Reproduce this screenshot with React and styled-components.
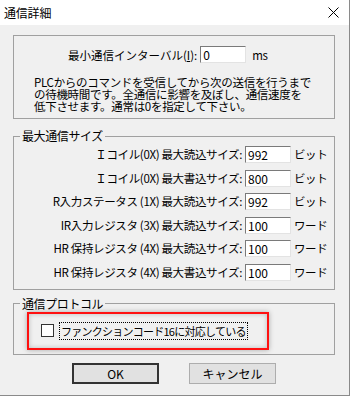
import styled, { createGlobalStyle } from "styled-components";

const GlobalStyle = createGlobalStyle`
  html, body {
    margin: 0;
    padding: 0;
    background: #f0f0f0;
  }
  body {
    width: 350px;
    height: 396px;
    overflow: hidden;
    font-family: "Noto Sans CJK JP", "Noto Sans", sans-serif;
    color: #000;
  }
`;

const Window = styled.div`
  box-sizing: border-box;
  width: 350px;
  height: 396px;
  background: #f0f0f0;
  border-right: 1px solid #8a8a8a;
  border-bottom: 1px solid #8a8a8a;
  display: flex;
  flex-direction: column;
`;

const TitleBar = styled.div`
  height: 25px;
  flex: none;
  background: #fff;
  display: flex;
  align-items: center;
  justify-content: space-between;
  padding: 0 10px 0 4px;
`;

const Title = styled.span`
  font-size: 12px;
  line-height: 14px;
  letter-spacing: -0.2px;
`;

const Body = styled.div`
  padding: 10px 14px 0 13px;
  display: flex;
  flex-direction: column;
  font-size: 11.5px;
`;

const PlainGroup = styled.div`
  box-sizing: border-box;
  height: 84px;
  border: 1px solid #a0a0a0;
  padding: 10px 0 0 54px;
`;

const Group = styled.fieldset`
  margin: ${(p) => p.$top}px 0 0 0;
  padding: ${(p) => p.$padTop}px 0 ${(p) => p.$padBottom}px 0;
  border: 1px solid #a0a0a0;
  min-width: 0;
`;

const Legend = styled.legend`
  margin-left: 6px;
  padding: 0 2px;
  font-size: 12px;
  line-height: 14px;
  letter-spacing: -0.4px;
`;

const IntervalRow = styled.div`
  display: flex;
  align-items: center;
  height: 17px;
`;

const Text = styled.span`
  font-size: 11.5px;
  line-height: 14px;
  letter-spacing: ${(p) => p.$ls ?? -0.35}px;
  white-space: nowrap;
  margin-left: ${(p) => p.$ml || 0}px;
`;

const Paragraph = styled.div`
  margin: 13px 0 0 -34px;
  display: flex;
  flex-direction: column;
`;

const Line = styled.div`
  height: 12px;
  font-size: 11.5px;
  line-height: 12px;
  letter-spacing: -0.3px;
  white-space: nowrap;
`;

const Field = styled.input`
  box-sizing: border-box;
  width: 46px;
  height: 17px;
  margin: 0 0 0 3px;
  padding: 0 0 0 2px;
  border: 1px solid;
  border-color: #7a7a7a #e3e3e3 #e3e3e3 #7a7a7a;
  background: #fff;
  font-family: "Noto Sans CJK JP", "Noto Sans", sans-serif;
  font-size: 12px;
  color: #000;
  outline: none;
`;

const SizeGrid = styled.div`
  display: grid;
  grid-template-columns: 1fr 46px 40px;
  column-gap: 3px;
  row-gap: 6.6px;
  align-items: center;
`;

const SizeLabel = styled.span`
  text-align: right;
  font-size: 11.5px;
  line-height: 17px;
  letter-spacing: -0.35px;
  white-space: nowrap;
`;

const GridField = styled(Field)`
  margin: 0;
`;

const Unit = styled.span`
  font-size: 11.5px;
  line-height: 17px;
  letter-spacing: -0.4px;
  white-space: nowrap;
`;

const Highlight = styled.div`
  box-sizing: border-box;
  width: 242px;
  height: 38px;
  margin-left: 13px;
  border: 2px solid #ff1010;
  box-shadow: 0 0 5px rgba(0, 0, 0, 0.3), inset 0 0 5px rgba(0, 0, 0, 0.22);
  display: flex;
  align-items: center;
  padding-left: 12px;
`;

const CheckBox = styled.span`
  box-sizing: border-box;
  width: 13px;
  height: 13px;
  border: 1px solid #333;
  background: #fff;
  flex: none;
`;

const CheckLabel = styled.span`
  margin-left: 5px;
  border: 1px dotted #000;
  height: 16px;
  padding: 0 1px;
  display: flex;
  align-items: center;
  font-size: 11px;
  letter-spacing: -0.75px;
  white-space: nowrap;
`;

const Buttons = styled.div`
  display: flex;
  justify-content: center;
  gap: 30px;
  margin-top: 8px;
`;

const Button = styled.button`
  box-sizing: border-box;
  width: 87px;
  height: 21px;
  padding: 0;
  background: #e1e1e1;
  border: 1px solid ${(p) => (p.$default ? "#333" : "#adadad")};
  box-shadow: ${(p) => (p.$default ? "inset 0 0 0 1px #333" : "none")};
  font-family: "Noto Sans CJK JP", "Noto Sans", sans-serif;
  font-size: 12px;
  color: #000;
`;

const note = [
  "PLCからのコマンドを受信してから次の送信を行うまで",
  "の待機時間です。全通信に影響を及ぼし、通信速度を",
  "低下させます。通常は0を指定して下さい。",
];

const rows = [
  ["Ｉコイル(0X) 最大読込サイズ:", "992", "ビット"],
  ["Ｉコイル(0X) 最大書込サイズ:", "800", "ビット"],
  ["R入力ステータス (1X) 最大読込サイズ:", "992", "ビット"],
  ["IR入力レジスタ (3X) 最大読込サイズ:", "100", "ワード"],
  ["HR 保持レジスタ (4X) 最大読込サイズ:", "100", "ワード"],
  ["HR 保持レジスタ (4X) 最大書込サイズ:", "100", "ワード"],
];

const CloseIcon = () => (
  <svg width="11" height="11" viewBox="0 0 11 11">
    <path d="M0.5 0.5 L10.5 10.5 M10.5 0.5 L0.5 10.5" stroke="#000" strokeWidth="1" />
  </svg>
);

export default function App() {
  return (
    <>
      <GlobalStyle />
      <Window>
        <TitleBar>
          <Title>通信詳細</Title>
          <CloseIcon />
        </TitleBar>
        <Body>
          <PlainGroup>
            <IntervalRow>
              <Text $ls={0}>
                最小通信インターバル(<u>I</u>):
              </Text>
              <Field readOnly value="0" />
              <Text $ml={6}>ms</Text>
            </IntervalRow>
            <Paragraph>
              {note.map((line) => (
                <Line key={line}>{line}</Line>
              ))}
            </Paragraph>
          </PlainGroup>

          <Group $top={10} $padTop={3} $padBottom={8}>
            <Legend>最大通信サイズ</Legend>
            <SizeGrid>
              {rows.map(([label, value, unit], i) => (
                <>
                  <SizeLabel key={"l" + i}>{label}</SizeLabel>
                  <GridField key={"f" + i} readOnly value={value} />
                  <Unit key={"u" + i}>{unit}</Unit>
                </>
              ))}
            </SizeGrid>
          </Group>

          <Group $top={7} $padTop={1} $padBottom={4}>
            <Legend>通信プロトコル</Legend>
            <Highlight>
              <CheckBox />
              <CheckLabel>ファンクションコード16に対応している</CheckLabel>
            </Highlight>
          </Group>

          <Buttons>
            <Button $default>OK</Button>
            <Button>キャンセル</Button>
          </Buttons>
        </Body>
      </Window>
    </>
  );
}
